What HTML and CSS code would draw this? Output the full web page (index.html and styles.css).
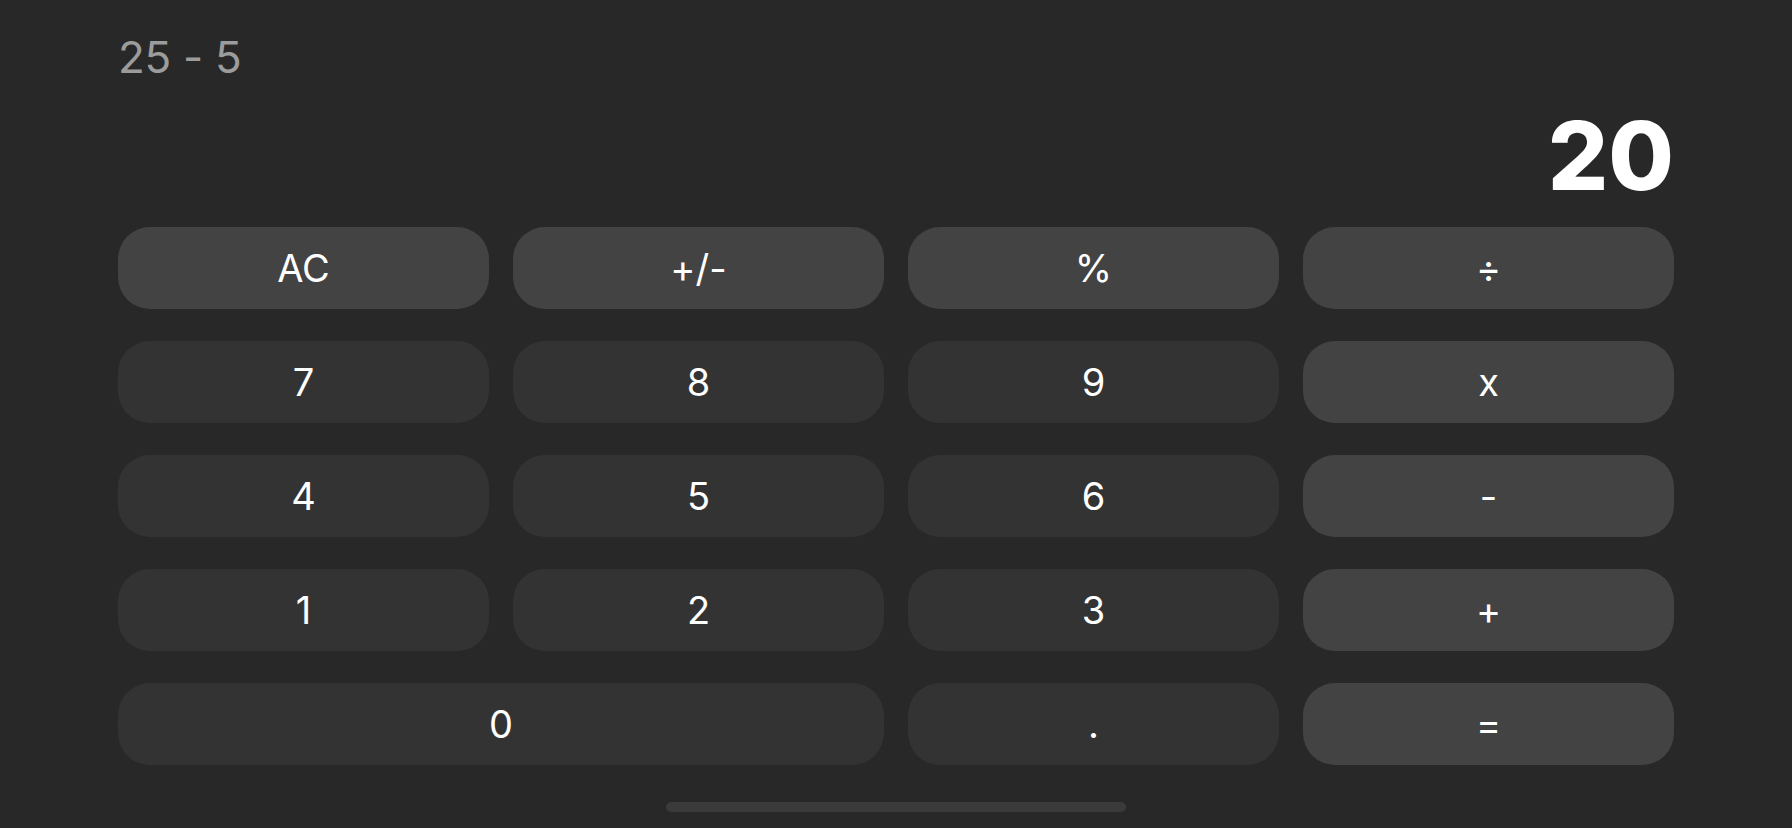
FILE: index.html
```html
<!DOCTYPE html>
<html lang="en">
<head>
<meta charset="utf-8">
<title>Calculator</title>
<link rel="stylesheet" href="styles.css">
</head>
<body>
<div class="app">
  <div class="expression">25 - 5</div>
  <div class="result">20</div>
  <div class="keys">
    <button class="key fn">AC</button>
    <button class="key fn">+/-</button>
    <button class="key fn">%</button>
    <button class="key op">÷</button>
    <button class="key num">7</button>
    <button class="key num">8</button>
    <button class="key num">9</button>
    <button class="key op">x</button>
    <button class="key num">4</button>
    <button class="key num">5</button>
    <button class="key num">6</button>
    <button class="key op">-</button>
    <button class="key num">1</button>
    <button class="key num">2</button>
    <button class="key num">3</button>
    <button class="key op">+</button>
    <button class="key num zero">0</button>
    <button class="key num">.</button>
    <button class="key op">=</button>
  </div>
  <div class="home-bar"></div>
</div>
</body>
</html>
```

FILE: styles.css
```css
html, body {
  margin: 0;
  padding: 0;
  background: #282828;
}
body {
  width: 1792px;
  height: 828px;
  overflow: hidden;
  font-family: Inter, "Liberation Sans", sans-serif;
}
.app {
  display: flex;
  flex-direction: column;
  padding: 35px 118px 0 118px;
  height: 828px;
  box-sizing: border-box;
}
.expression {
  font-size: 44px;
  line-height: 44px;
  height: 44px;
  color: #9c9c9c;
  font-weight: 400;
  letter-spacing: -0.3px;
}
.result {
  margin-top: 29px;
  font-size: 95px;
  line-height: 95px;
  height: 95px;
  color: #ffffff;
  font-weight: 800;
  text-align: right;
}
.keys {
  margin-top: 24px;
  display: grid;
  grid-template-columns: repeat(4, 1fr);
  grid-auto-rows: 82px;
  column-gap: 24px;
  row-gap: 32px;
}
.key {
  border: none;
  border-radius: 32px;
  color: #ffffff;
  font-family: Inter, "Liberation Sans", sans-serif;
  font-size: 38px;
  font-weight: 400;
  padding: 0;
  display: flex;
  align-items: center;
  justify-content: center;
}
.fn, .op {
  background: #434343;
}
.num {
  background: #333333;
}
.zero {
  grid-column: span 2;
}
.home-bar {
  align-self: center;
  margin-top: 37px;
  width: 460px;
  height: 10px;
  border-radius: 5px;
  background: #3a3a3a;
}
```
